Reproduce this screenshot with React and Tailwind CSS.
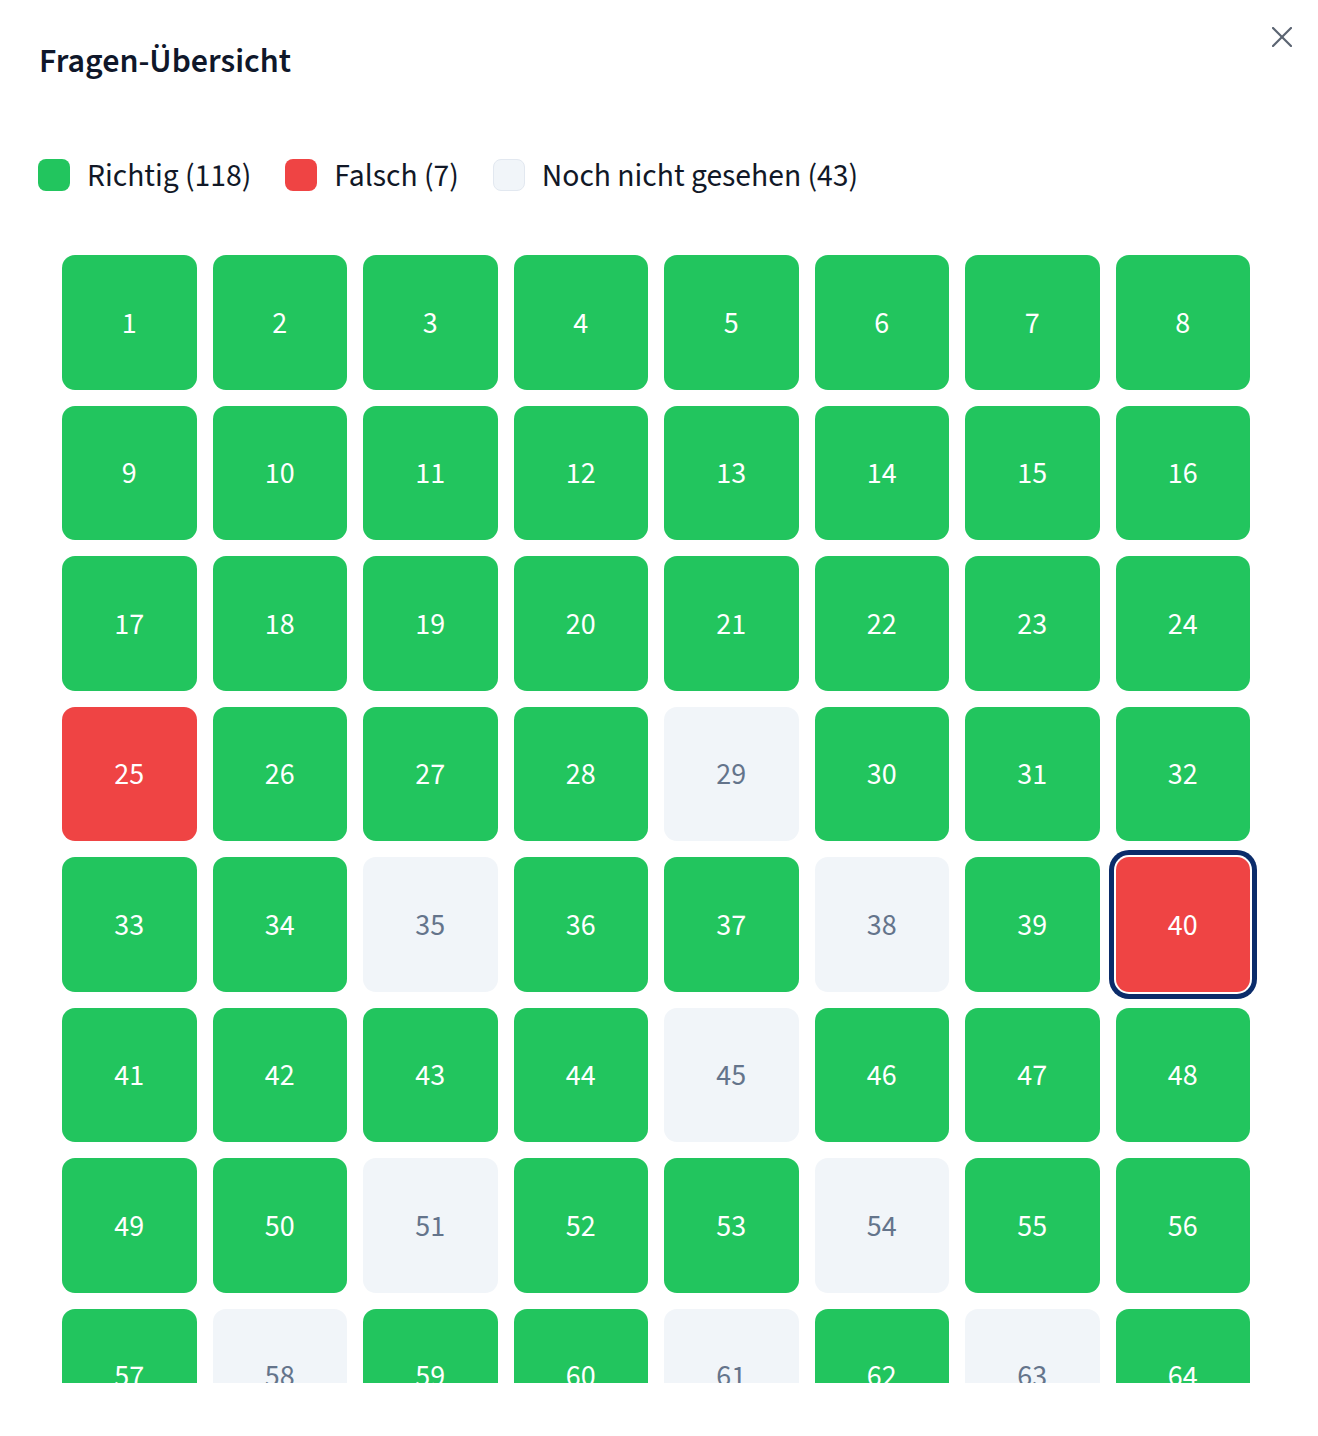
import React from "react";

const GRAY = new Set([29, 35, 38, 45, 51, 54, 58, 61, 63]);
const RED = new Set([25, 40]);

function stateOf(n) {
  if (RED.has(n)) return "red";
  if (GRAY.has(n)) return "gray";
  return "green";
}

function Tile({ n }) {
  const s = stateOf(n);
  const current = n === 40;
  const base =
    "aspect-square w-full rounded-[13px] flex items-center justify-center pt-[3px] text-[30px] leading-none";
  const color =
    s === "green"
      ? "bg-[#22c55e] text-white"
      : s === "red"
      ? "bg-[#ef4444] text-white"
      : "bg-[#f1f5f9] text-[#64748b]";
  const ring = current ? " ring-[5px] ring-[#0b2c6a] ring-offset-[2px] ring-offset-white" : "";
  return <div className={base + " " + color + ring}>{n}</div>;
}

function Legend({ swatch, label }) {
  return (
    <div className="flex items-center gap-[17px] h-[32px]">
      <span className={"w-[32px] h-[32px] rounded-[8px] shrink-0 " + swatch} />
      <span className="h-[32px] text-[31.6px] leading-[36px] text-[#111827] whitespace-nowrap">{label}</span>
    </div>
  );
}

export default function App() {
  const nums = Array.from({ length: 64 }, (_, i) => i + 1);
  return (
    <div
      className="relative w-[1318px] h-[1436px] bg-white overflow-hidden"
      style={{ fontFamily: '"Source Sans 3", "Source Sans Pro", Lato, "Noto Sans", sans-serif' }}
    >
      <button className="absolute left-[1272px] top-[27px] w-[20px] h-[20px] text-[#5b6472]">
        <svg width="20" height="20" viewBox="0 0 20 20" fill="none" stroke="currentColor" strokeWidth="2.2" strokeLinecap="round">
          <line x1="1" y1="1" x2="19" y2="19" />
          <line x1="19" y1="1" x2="1" y2="19" />
        </svg>
      </button>
      <div className="pl-[38px] pt-[41px]">
        <h2 className="pl-[1px] text-[34px] leading-[42px] font-semibold text-[#0f172a]">Fragen-Übersicht</h2>
        <div className="mt-[76px] flex items-center gap-[34px]">
          <Legend swatch="bg-[#22c55e]" label="Richtig (118)" />
          <Legend swatch="bg-[#ef4444]" label="Falsch (7)" />
          <Legend swatch="bg-[#f1f5f9] border border-[#e2e8f0]" label="Noch nicht gesehen (43)" />
        </div>
      </div>
      <div className="mt-[64px] h-[1128px] overflow-hidden pl-[62px]">
        <div className="w-[1188px] grid grid-cols-8 gap-[16px]">
          {nums.map((n) => (
            <Tile key={n} n={n} />
          ))}
        </div>
      </div>
    </div>
  );
}
